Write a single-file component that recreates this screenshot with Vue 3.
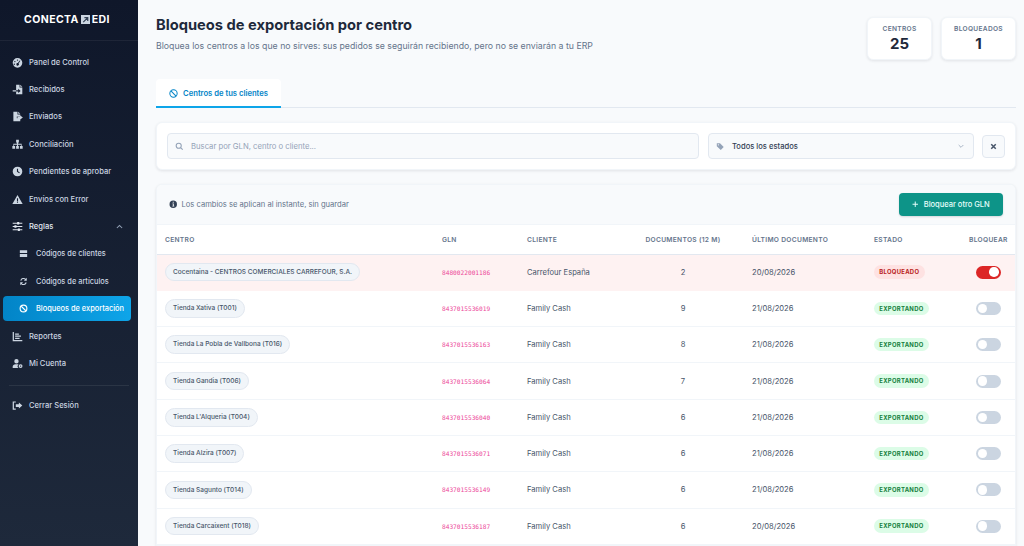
<script setup>
const icons = {
  gauge: 'M8 1.500a7 7 0 1 0 0 14 7 7 0 0 0 0-14zM8 3.500a1 1 0 1 1 0 2 1 1 0 0 1 0-2zM4.200 5.700a1 1 0 1 1 0 2 1 1 0 0 1 0-2zM11.200 5l1 .6-2.600 3.900a1.800 1.800 0 1 1-1-.6zM3.300 9.500a1 1 0 1 1 0 2 1 1 0 0 1 0-2z',
  fileIn: 'M6 1h5v4h4v10H6v-4h3v2l3.500-3L9 7v2H6zM12 1l3 3h-3zM1 9h5v2H1z',
  fileOut: 'M2 1h6v4h4v3H7v2.500h5V15H2zM9 1l3 3H9zM12 6.500l3.800 3-3.800 3v-2H8v-2h4z',
  sitemap: 'M6 1h4v4H9v2h5v3h1.500v4h-4v-4H13V8.500H8.800V10H10v4H6v-4h1.200V8.500H3V10h1.500v4h-4v-4H2V7h5V5H6z',
  clock: 'M8 1a7 7 0 1 0 0 14A7 7 0 0 0 8 1zM7.200 4h1.600v3.600l2.600 1.800-.9 1.300-3.300-2.300z',
  warn: 'M8 1.500l7.500 13H.5zM7.200 6v4.200h1.600V6zM7.200 11v1.600h1.600V11z',
  sliders: 'M1 2.500h6.500V1.500h3v1h4.500v1.500h-4.500v1h-3V4H1zM1 7.200h2.500v-1h3v1H15v1.600H6.500v1h-3v-1H1zM1 12h7.500v-1h3v1H15v1.500h-3.500v1h-3v-1H1z',
  server: 'M1.500 2h13v5h-13zM1.500 9h13v5h-13z',
  sync: 'M13.800 1.500v5h-5l1.900-1.900A4 4 0 0 0 4.200 6.500L2.300 6A6 6 0 0 1 12.100 3.200zM2.200 14.500v-5h5l-1.900 1.900a4 4 0 0 0 6.500-1.900l1.900.5A6 6 0 0 1 3.900 12.800z',
  chart: 'M1 1.500h1.800v11.700H15V15H1zM4.500 3.500h5.500v1.800H4.500zM4.500 6.700h8.500v1.800H4.500zM4.500 9.900h6.500v1.800H4.500z',
  userCog: 'M6.500 1.500a3.200 3.200 0 1 1 0 6.400 3.200 3.200 0 0 1 0-6.400zM1 14.500v-2c0-2 1.800-3.500 4-3.500h3c.6 0 1 .1 1.400.3a3.500 3.500 0 0 0 .1 5.200zM12.500 9a2.800 2.800 0 1 0 0 5.600 2.800 2.800 0 0 0 0-5.600zM12.500 10.800a1 1 0 1 1 0 2 1 1 0 0 1 0-2z',
  signOut: 'M1 2h4.500v1.700H2.800v8.600h2.700V14H1zM10 3.500L15 8l-5 4.500V10H5.500V6H10z',
  tag: 'M1.500 2.500h6l7 7-5.500 5.500-7.500-7zM4.500 4.200a1.200 1.200 0 1 0 0 2.400 1.200 1.200 0 0 0 0-2.400z',
  info: 'M8 1a7 7 0 1 0 0 14A7 7 0 0 0 8 1zM7.100 3.500h1.800v1.800H7.100zM6.500 6.800h2.500v4h.9V12H6.300v-1.200h1v-2.800h-.8z'
}
const nav = [
  { t: 'Panel de Control', i: 'gauge' },
  { t: 'Recibidos', i: 'fileIn' },
  { t: 'Enviados', i: 'fileOut' },
  { t: 'Conciliación', i: 'sitemap' },
  { t: 'Pendientes de aprobar', i: 'clock' },
  { t: 'Envíos con Error', i: 'warn' }
]
const rows = [
  { c: 'Cocentaina - CENTROS COMERCIALES CARREFOUR, S.A.', g: '8480022001186', cl: 'Carrefour España', d: 2, u: '20/08/2026', b: true },
  { c: 'Tienda Xativa (T001)', g: '8437015536019', cl: 'Family Cash', d: 9, u: '21/08/2026' },
  { c: 'Tienda La Pobla de Vallbona (T016)', g: '8437015536163', cl: 'Family Cash', d: 8, u: '21/08/2026' },
  { c: 'Tienda Gandia (T006)', g: '8437015536064', cl: 'Family Cash', d: 7, u: '21/08/2026' },
  { c: "Tienda L'Alqueria (T004)", g: '8437015536040', cl: 'Family Cash', d: 6, u: '21/08/2026' },
  { c: 'Tienda Alzira (T007)', g: '8437015536071', cl: 'Family Cash', d: 6, u: '21/08/2026' },
  { c: 'Tienda Sagunto (T014)', g: '8437015536149', cl: 'Family Cash', d: 6, u: '21/08/2026' },
  { c: 'Tienda Carcaixent (T018)', g: '8437015536187', cl: 'Family Cash', d: 6, u: '20/08/2026' }
]
</script>

<template>
  <div class="app">
    <aside class="side">
      <div class="brand">
        <span>CONECTA</span>
        <svg class="brand-ic" viewBox="0 0 12 12"><rect width="12" height="12" fill="#cbd5e1"/><path d="M3 9.500L8 4.500M4.500 3.500h4.500v4.500" fill="none" stroke="#334155" stroke-width="1.600"/></svg>
        <span>EDI</span>
      </div>
      <nav class="menu">
        <a v-for="n in nav" :key="n.t" class="item">
          <svg class="ic" viewBox="0 0 16 16"><path :d="icons[n.i]" fill-rule="evenodd"/></svg>
          <span>{{ n.t }}</span>
        </a>
        <a class="item open">
          <svg class="ic" viewBox="0 0 16 16"><path :d="icons.sliders" fill-rule="evenodd"/></svg>
          <span class="grow">Reglas</span>
          <svg class="chev" viewBox="0 0 12 12"><path d="M2.500 8L6 4.500 9.500 8" fill="none" stroke="currentColor" stroke-width="1.400"/></svg>
        </a>
        <a class="item sub">
          <svg class="ic small" viewBox="0 0 16 16"><path :d="icons.server"/></svg>
          <span>Códigos de clientes</span>
        </a>
        <a class="item sub">
          <svg class="ic small" viewBox="0 0 16 16"><path :d="icons.sync"/></svg>
          <span>Códigos de artículos</span>
        </a>
        <a class="item sub active">
          <svg class="ic small" viewBox="0 0 16 16"><circle cx="8" cy="8" r="6" fill="none" stroke="currentColor" stroke-width="2"/><path d="M4 4l8 8" stroke="currentColor" stroke-width="2"/></svg>
          <span>Bloqueos de exportación</span>
        </a>
        <a class="item">
          <svg class="ic" viewBox="0 0 16 16"><path :d="icons.chart"/></svg>
          <span>Reportes</span>
        </a>
        <a class="item">
          <svg class="ic" viewBox="0 0 16 16"><path :d="icons.userCog" fill-rule="evenodd"/></svg>
          <span>Mi Cuenta</span>
        </a>
        <div class="sep"></div>
        <a class="item">
          <svg class="ic" viewBox="0 0 16 16"><path :d="icons.signOut"/></svg>
          <span>Cerrar Sesión</span>
        </a>
      </nav>
    </aside>

    <main class="main">
      <header class="head">
        <div class="titles">
          <h1>Bloqueos de exportación por centro</h1>
          <p>Bloquea los centros a los que no sirves: sus pedidos se seguirán recibiendo, pero no se enviarán a tu ERP</p>
        </div>
        <div class="stats">
          <div class="stat s1"><small>CENTROS</small><b>25</b></div>
          <div class="stat s2"><small>BLOQUEADOS</small><b>1</b></div>
        </div>
      </header>

      <div class="tabs">
        <div class="tab">
          <svg class="tab-ic" viewBox="0 0 16 16"><circle cx="8" cy="8" r="6.500" fill="none" stroke="currentColor" stroke-width="1.800"/><path d="M3.500 3.500l9 9" stroke="currentColor" stroke-width="1.800"/></svg>
          <span>Centros de tus clientes</span>
        </div>
      </div>

      <section class="filters">
        <label class="field search">
          <svg class="f-ic" viewBox="0 0 16 16"><circle cx="7" cy="7" r="4.800" fill="none" stroke="currentColor" stroke-width="2"/><path d="M10.500 10.500L14.500 14.500" stroke="currentColor" stroke-width="2"/></svg>
          <span>Buscar por GLN, centro o cliente...</span>
        </label>
        <label class="field select">
          <svg class="f-ic" viewBox="0 0 16 16"><path :d="icons.tag" fill-rule="evenodd"/></svg>
          <span class="val">Todos los estados</span>
          <svg class="sel-chev" viewBox="0 0 12 12"><path d="M2.500 4.500L6 8l3.500-3.500" fill="none" stroke="currentColor" stroke-width="1.200"/></svg>
        </label>
        <button class="clear">
          <svg viewBox="0 0 12 12"><path d="M3 3l6 6M9 3l-6 6" stroke="currentColor" stroke-width="2"/></svg>
        </button>
      </section>

      <section class="card">
        <div class="toolbar">
          <div class="note">
            <svg viewBox="0 0 16 16"><path :d="icons.info" fill-rule="evenodd"/></svg>
            <span>Los cambios se aplican al instante, sin guardar</span>
          </div>
          <button class="add">
            <svg viewBox="0 0 12 12"><path d="M6 1v10M1 6h10" stroke="currentColor" stroke-width="1.800"/></svg>
            <span>Bloquear otro GLN</span>
          </button>
        </div>
        <table>
          <colgroup>
            <col class="c1"><col class="c2"><col class="c3"><col class="c4"><col class="c5"><col class="c6"><col class="c7">
          </colgroup>
          <thead>
            <tr>
              <th>CENTRO</th><th>GLN</th><th>CLIENTE</th>
              <th class="mid">DOCUMENTOS (12 M)</th><th>ÚLTIMO DOCUMENTO</th><th>ESTADO</th><th class="mid">BLOQUEAR</th>
            </tr>
          </thead>
          <tbody>
            <tr v-for="r in rows" :key="r.g" :class="{ blocked: r.b }">
              <td><span class="pill">{{ r.c }}</span></td>
              <td><code>{{ r.g }}</code></td>
              <td>{{ r.cl }}</td>
              <td class="mid">{{ r.d }}</td>
              <td>{{ r.u }}</td>
              <td><span class="badge" :class="r.b ? 'red' : 'green'">{{ r.b ? 'BLOQUEADO' : 'EXPORTANDO' }}</span></td>
              <td class="mid"><span class="toggle" :class="{ on: r.b }"><i></i></span></td>
            </tr>
          </tbody>
        </table>
      </section>
    </main>
  </div>
</template>

<style>
html, body { margin: 0; overflow: hidden; }
</style>

<style scoped>
* { box-sizing: border-box; }
.app {
  display: flex;
  height: 546px;
  width: 1024px;
  overflow: hidden;
  font-family: Inter, "Liberation Sans", sans-serif;
  background: #f8fafc;
}
.side {
  width: 138px;
  flex: none;
  background: linear-gradient(180deg, #0f172a 0%, #1e293b 100%);
  color: #cbd5e1;
}
.brand {
  height: 41px;
  display: flex;
  align-items: center;
  justify-content: center;
  gap: 2px;
  padding: 0 4px 1px 0;
  border-bottom: 1px solid rgba(255, 255, 255, .06);
  color: #fff;
  font-size: 10.500px;
  font-weight: 700;
  letter-spacing: .4px;
}
.brand-ic { width: 9px; height: 9px; }
.menu { padding-top: 7.500px; }
.item {
  display: flex;
  align-items: center;
  height: 27.400px;
  padding: 0 12px;
  font-size: 7.600px;
  font-weight: 500;
  gap: 6px;
  color: #cbd5e1;
  white-space: nowrap;
}
.ic { width: 11px; height: 11px; fill: currentColor; flex: none; }
.ic.small { width: 9px; height: 9px; margin-left: 7px; margin-right: 2px; }
.item.open { color: #e2e8f0; }
.grow { flex: 1; }
.chev { width: 9px; height: 9px; margin-right: 2px; color: #94a3b8; }
.item.sub { font-size: 7.400px; }
.item.sub.active {
  margin: 1px 7px 1.400px 3px;
  padding: 0 9px;
  height: 25px;
  border-radius: 4px;
  color: #fff;
  background: linear-gradient(90deg, #0284c7, #0ea5e9);
}
.sep {
  height: 1px;
  margin: 7.500px 9px 6px;
  background: rgba(255, 255, 255, .08);
}
.main {
  flex: 1;
  padding: 0 8px 0 18px;
  min-width: 0;
}
.head {
  display: flex;
  justify-content: space-between;
  height: 79px;
  padding-top: 17px;
}
h1 {
  margin: -1px 0 0;
  font-size: 14.700px;
  line-height: 18px;
  font-weight: 700;
  color: #1e293b;
}
.titles p {
  margin: 5px 0 0;
  font-size: 8.750px;
  line-height: 14px;
  color: #64748b;
}
.stats { display: flex; gap: 9px; }
.stat {
  height: 43px;
  padding-top: 1px;
  background: #fff;
  border: 1px solid #f1f5f9;
  border-radius: 6px;
  box-shadow: 0 1px 3px rgba(15, 23, 42, .1);
  display: flex;
  flex-direction: column;
  align-items: center;
  justify-content: center;
}
.s1 { width: 65px; }
.s2 { width: 75px; }
.stat small {
  font-size: 6.600px;
  line-height: 9px;
  margin-bottom: 1px;
  font-weight: 600;
  letter-spacing: .3px;
  color: #64748b;
}
.stat b {
  font-size: 15px;
  line-height: 18px;
  font-weight: 700;
  color: #1e293b;
}
.tabs {
  height: 29px;
  border-bottom: 1px solid #e2e8f0;
  display: flex;
}
.tab {
  width: 125px;
  height: 29px;
  padding-top: 1px;
  background: #fff;
  border-bottom: 2px solid #0ea5e9;
  border-radius: 4px 4px 0 0;
  display: flex;
  align-items: center;
  justify-content: center;
  gap: 5px;
  color: #0284c7;
  font-size: 7.650px;
  font-weight: 600;
}
.tab-ic { width: 9px; height: 9px; }
.filters {
  margin-top: 14px;
  height: 48px;
  background: #fff;
  border-radius: 6px;
  border: 1px solid #f1f5f9;
  box-shadow: 0 1px 3px rgba(15, 23, 42, .1);
  display: flex;
  align-items: center;
  padding: 0 10px;
}
.field {
  height: 26px;
  background: #f8fafc;
  border: 1px solid #e2e8f0;
  border-radius: 4px;
  display: flex;
  align-items: center;
  padding: 0 7px;
  font-size: 7.700px;
  color: #94a3b8;
  flex: none;
}
.search { width: 532px; }
.select { width: 266px; margin-left: 9px; color: #334155; font-size: 7.600px; }
.f-ic { width: 8.500px; height: 8.500px; fill: #94a3b8; color: #94a3b8; flex: none; margin-right: 7.500px; }
.val { flex: 1; font-weight: 500; }
.sel-chev { width: 8px; height: 8px; color: #94a3b8; margin-right: 1px; }
.clear {
  width: 23px;
  height: 23px;
  margin-left: 8px;
  padding: 0;
  flex: none;
  background: #f8fafc;
  border: 1px solid #e2e8f0;
  border-radius: 4px;
  display: flex;
  align-items: center;
  justify-content: center;
  color: #475569;
}
.clear svg { width: 9px; height: 9px; }
.card {
  margin-top: 14px;
  background: #fff;
  border: 1px solid #f1f5f9;
  border-radius: 6px 6px 0 0;
  box-shadow: 0 1px 3px rgba(15, 23, 42, .1);
  overflow: hidden;
}
.toolbar {
  height: 40px;
  background: #f8fafc;
  border-bottom: 1px solid #f1f5f9;
  display: flex;
  align-items: center;
  justify-content: space-between;
  padding: 0 12px 0 12px;
}
.note {
  display: flex;
  align-items: center;
  gap: 4px;
  font-size: 7.600px;
  color: #64748b;
}
.note svg { width: 8.500px; height: 8.500px; fill: #334155; }
.add {
  width: 104px;
  height: 23px;
  padding: 0;
  border: 0;
  border-radius: 4px;
  background: #0d9488;
  color: #e6fffb;
  font: 500 7.500px Inter, sans-serif;
  display: flex;
  align-items: center;
  justify-content: center;
  gap: 5px;
  box-shadow: 0 1px 2px rgba(15, 23, 42, .15);
}
.add svg { width: 6.500px; height: 6.500px; }
table {
  width: 858px;
  table-layout: fixed;
  border-collapse: collapse;
  font-size: 7.600px;
  color: #475569;
}
.c1 { width: 277px; }
.c2 { width: 85px; }
.c3 { width: 103px; }
.c4 { width: 122px; }
.c5 { width: 122px; }
.c6 { width: 95px; }
.c7 { width: 54px; }
th {
  height: 29px;
  padding: 1px 8px 0;
  text-align: left;
  font-size: 6.650px;
  font-weight: 600;
  letter-spacing: .3px;
  color: #64748b;
  border-bottom: 1px solid #e2e8f0;
}
td {
  height: 36.300px;
  padding: 0 8px;
  border-bottom: 1px solid #f1f5f9;
}
.mid { text-align: center; }
.blocked td { background: #fef2f2; border-bottom-color: #fef2f2; }
.pill {
  display: inline-block;
  padding: 0 7px;
  height: 18.500px;
  line-height: 17px;
  background: #f1f5f9;
  border: 1px solid #e2e8f0;
  border-radius: 10px;
  font-size: 6.500px;
  font-weight: 500;
  color: #475569;
  white-space: nowrap;
}
code {
  font-family: "DejaVu Sans Mono", "Liberation Mono", monospace;
  font-size: 6.160px;
  color: #ec4899;
}
.badge {
  display: inline-block;
  height: 13.500px;
  line-height: 13.500px;
  padding: 0 5.300px;
  border-radius: 7px;
  font-size: 5.900px;
  font-weight: 700;
  letter-spacing: .3px;
}
.red { background: #fee2e2; color: #b91c1c; }
.green { background: #dcfce7; color: #15803d; }
.toggle {
  display: inline-flex;
  vertical-align: middle;
  align-items: center;
  width: 25px;
  height: 13px;
  padding: 2px;
  border-radius: 7px;
  background: #cbd5e1;
}
.toggle i {
  width: 9.500px;
  height: 9.500px;
  border-radius: 50%;
  background: #fff;
}
.toggle.on { background: #dc2626; justify-content: flex-end; }
</style>
